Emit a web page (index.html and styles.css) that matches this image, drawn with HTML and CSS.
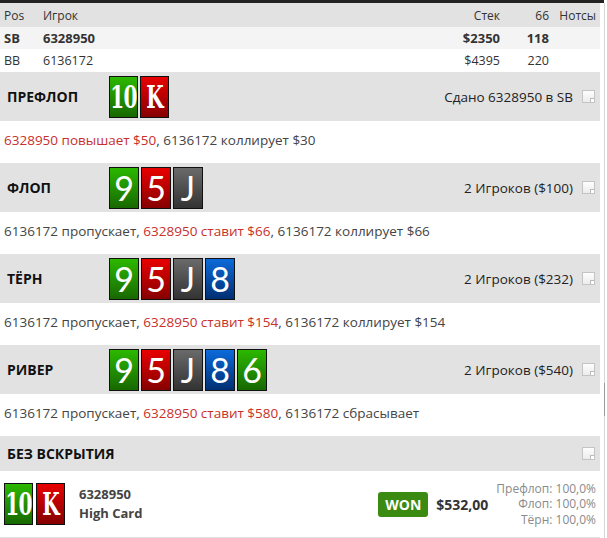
FILE: index.html
```html
<!DOCTYPE html>
<html lang="ru">
<head>
    <meta charset="UTF-8">
    <title>Раздача</title>
    <link rel="stylesheet" href="styles.css">
</head>
<body>
    <div class="page">
        <div class="topbar"></div>
        <div class="hand">
            <!-- players table -->
            <div class="players">
                <div class="prow phead">
                    <span>Pos</span><span>Игрок</span><span class="num">Стек</span><span class="num">66</span><span class="num">Нотсы</span>
                </div>
                <div class="prow hero">
                    <span>SB</span><span>6328950</span><span class="num">$2350</span><span class="num">118</span><span></span>
                </div>
                <div class="prow">
                    <span>BB</span><span>6136172</span><span class="num">$4395</span><span class="num">220</span><span></span>
                </div>
            </div>

            <!-- preflop -->
            <div class="street-head">
                <div class="street-name">ПРЕФЛОП</div>
                <div class="cards">
                    <div class="card green slab"><span>10</span></div>
                    <div class="card red slab"><span>K</span></div>
                </div>
                <div class="street-info">Сдано 6328950 в SB</div>
                <span class="note"></span>
            </div>
            <div class="actions"><span class="hero-act">6328950 повышает $50</span>, 6136172 коллирует $30</div>

            <!-- flop -->
            <div class="street-head">
                <div class="street-name">ФЛОП</div>
                <div class="cards">
                    <div class="card green">9</div>
                    <div class="card red">5</div>
                    <div class="card grey">J</div>
                </div>
                <div class="street-info">2 Игроков ($100)</div>
                <span class="note"></span>
            </div>
            <div class="actions">6136172 пропускает, <span class="hero-act">6328950 ставит $66</span>, 6136172 коллирует $66</div>

            <!-- turn -->
            <div class="street-head">
                <div class="street-name">ТЁРН</div>
                <div class="cards">
                    <div class="card green">9</div>
                    <div class="card red">5</div>
                    <div class="card grey">J</div>
                    <div class="card blue">8</div>
                </div>
                <div class="street-info">2 Игроков ($232)</div>
                <span class="note"></span>
            </div>
            <div class="actions">6136172 пропускает, <span class="hero-act">6328950 ставит $154</span>, 6136172 коллирует $154</div>

            <!-- river -->
            <div class="street-head">
                <div class="street-name">РИВЕР</div>
                <div class="cards">
                    <div class="card green">9</div>
                    <div class="card red">5</div>
                    <div class="card grey">J</div>
                    <div class="card blue">8</div>
                    <div class="card green">6</div>
                </div>
                <div class="street-info">2 Игроков ($540)</div>
                <span class="note"></span>
            </div>
            <div class="actions">6136172 пропускает, <span class="hero-act">6328950 ставит $580</span>, 6136172 сбрасывает</div>

            <!-- result -->
            <div class="street-head short">
                <div class="street-name">БЕЗ ВСКРЫТИЯ</div>
                <div class="street-info"></div>
                <span class="note"></span>
            </div>
            <div class="result">
                <div class="cards">
                    <div class="card green slab"><span>10</span></div>
                    <div class="card red slab"><span>K</span></div>
                </div>
                <div class="winner">
                    <div>6328950</div>
                    <div>High Card</div>
                </div>
                <div class="won">WON</div>
                <div class="amount">$532,00</div>
                <div class="equity">
                    <div>Префлоп: 100,0%</div>
                    <div>Флоп: 100,0%</div>
                    <div>Тёрн: 100,0%</div>
                </div>
            </div>
        </div>
        <div class="scroll"><div class="thumb"></div></div>
    </div>
</body>
</html>
```

FILE: styles.css
```css
body {
    margin: 0;
    background: #fff;
    font-family: "Open Sans", "Liberation Sans", sans-serif;
    color: #333;
    width: 607px;
    height: 538px;
    overflow: hidden;
}
.page {
    position: relative;
    height: 538px;
}
.topbar {
    width: 604px;
    height: 3px;
    background: #222;
}
.hand {
    width: 600px;
}
.scroll {
    position: absolute;
    top: 3px;
    left: 604px;
    width: 1px;
    bottom: 0;
    background: #d6d6d6;
}
.thumb {
    margin-top: 380px;
    height: 33px;
    background: #9a9a9a;
}

/* players table */
.prow {
    display: grid;
    grid-template-columns: 39px 1fr 60px 49px 47px;
    align-items: center;
    height: 22px;
    font-size: 12.5px;
    padding-left: 4px;
    padding-right: 4px;
}
.prow .num {
    text-align: right;
}
.phead {
    height: 24px;
    background: #e2e2e2;
    font-size: 12px;
}
.hero {
    background: #f4f4f4;
    font-weight: bold;
    font-size: 13px;
}
.players {
    margin-bottom: 1px;
}

/* streets */
.street-head {
    display: flex;
    align-items: center;
    height: 49px;
    background: #e2e2e2;
    padding-right: 5px;
}
.street-head.short {
    height: 35px;
}
.street-name {
    width: 102px;
    flex-shrink: 0;
    padding-left: 7px;
    font-weight: bold;
    font-size: 14px;
    color: #111;
    white-space: nowrap;
}
.street-info {
    flex: 1;
    text-align: right;
    font-size: 13.5px;
    color: #222;
    padding-right: 9px;
}
.note {
    position: relative;
    width: 11px;
    height: 11px;
    border: 1px solid #c4c4c4;
    background: linear-gradient(#fdfdfd, #ececec);
}
.note::after {
    content: "";
    position: absolute;
    right: 0;
    bottom: 0;
    width: 3px;
    height: 3px;
    border-top: 1px solid #bbb;
    border-left: 1px solid #bbb;
    background: #fff;
}
.actions {
    height: 42px;
    line-height: 38px;
    padding-left: 4px;
    font-size: 13.5px;
    color: #444;
    white-space: nowrap;
}
.hero-act {
    color: #c8302a;
}

/* cards */
.cards {
    display: flex;
    gap: 2px;
}
.card {
    width: 28px;
    height: 40px;
    border: 1px solid #111;
    color: #fff;
    font-family: "Lato", "DejaVu Sans", sans-serif;
    font-size: 34px;
    line-height: 40px;
    text-align: center;
    overflow: hidden;
}
.card.slab {
    width: 27px;
    font-family: "DejaVu Serif Condensed", "DejaVu Serif", serif;
    font-stretch: condensed;
    font-weight: bold;
    font-size: 31px;
    display: flex;
    justify-content: center;
}
.card.slab span {
    display: inline-block;
    transform: scaleX(0.72);
    letter-spacing: -1px;
}
.green {
    background: linear-gradient(#2cb800, #186800);
}
.red {
    background: linear-gradient(#e80000, #860000);
}
.grey {
    background: linear-gradient(#6a6a6a, #333);
}
.blue {
    background: linear-gradient(#0c6ada, #002f72);
}

/* result */
.result {
    display: flex;
    align-items: center;
    height: 66px;
    padding-left: 4px;
    padding-right: 4px;
    border-bottom: 1px solid #e0e0e0;
}
.result .cards {
    gap: 3px;
}
.winner {
    flex: 1;
    padding-left: 14px;
    font-weight: bold;
    font-size: 13px;
    color: #444;
    line-height: 19px;
}
.won {
    background: #3b8a12;
    color: #fff;
    font-weight: bold;
    font-size: 14px;
    padding: 2px 7px;
    line-height: 21px;
    border-radius: 3px;
}
.amount {
    font-weight: bold;
    font-size: 14px;
    color: #333;
    padding-left: 8px;
    padding-right: 8px;
}
.equity {
    text-align: right;
    font-size: 12px;
    color: #8a8a8a;
    line-height: 15.5px;
}
```
